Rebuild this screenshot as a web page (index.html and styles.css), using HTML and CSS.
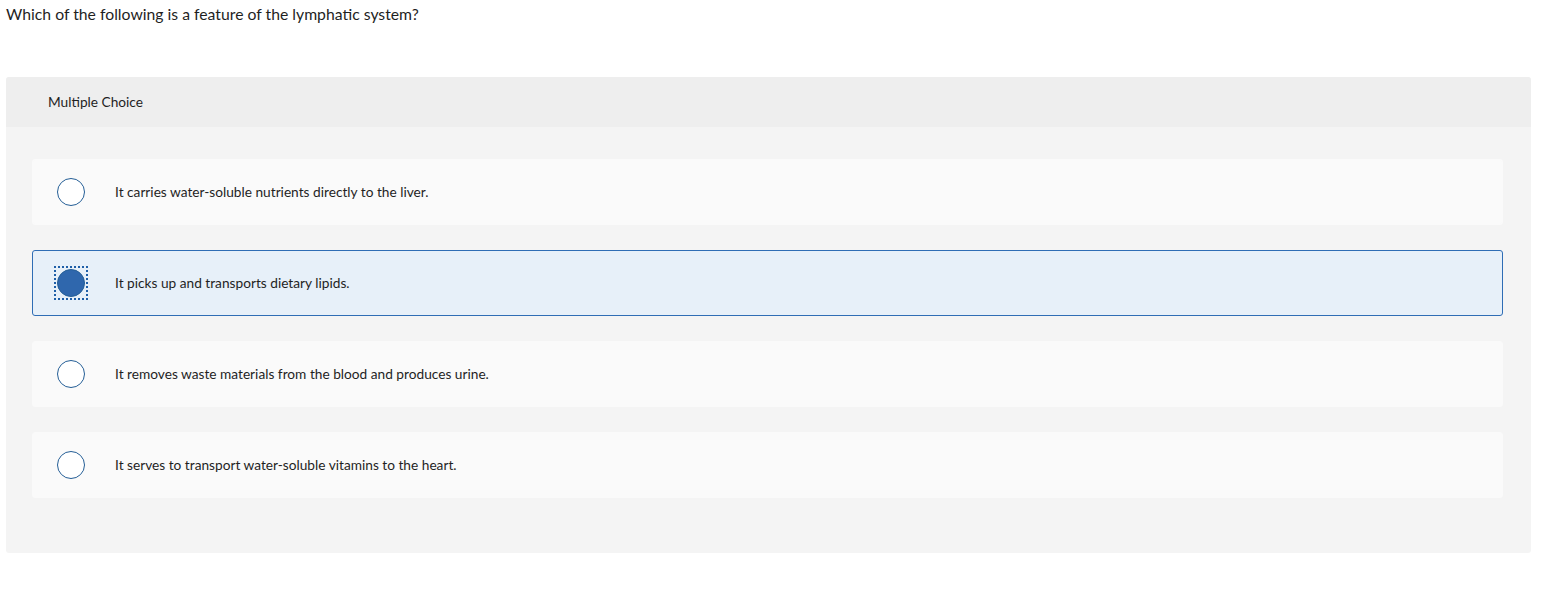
FILE: index.html
```html
<!DOCTYPE html>
<html lang="en">
<head>
<meta charset="utf-8">
<title>Multiple Choice</title>
<link rel="stylesheet" href="styles.css">
</head>
<body>
<div class="page">
  <p class="question">Which of the following is a feature of the lymphatic system?</p>
  <section class="panel">
    <div class="panel-header"><span class="header-text">Multiple Choice</span></div>
    <div class="options">
      <div class="option">
        <span class="radio-focus"><span class="radio"></span></span>
        <span class="label">It carries water-soluble nutrients directly to the liver.</span>
      </div>
      <div class="option selected">
        <span class="radio-focus focused"><span class="radio checked"></span></span>
        <span class="label">It picks up and transports dietary lipids.</span>
      </div>
      <div class="option">
        <span class="radio-focus"><span class="radio"></span></span>
        <span class="label">It removes waste materials from the blood and produces urine.</span>
      </div>
      <div class="option">
        <span class="radio-focus"><span class="radio"></span></span>
        <span class="label">It serves to transport water-soluble vitamins to the heart.</span>
      </div>
    </div>
  </section>
</div>
</body>
</html>
```

FILE: styles.css
```css
html, body {
  margin: 0;
  padding: 0;
  background: #ffffff;
}

body {
  font-family: Lato, "Liberation Sans", Arial, sans-serif;
  color: #1f1f1f;
}

.page {
  padding: 0 25px 0 6px;
}

.question {
  margin: 0;
  padding-top: 5px;
  font-size: 15.75px;
  line-height: 18px;
  height: 77px;
  box-sizing: border-box;
}

.panel {
  width: 1525px;
  background: #f4f4f4;
  border-radius: 3px;
  overflow: hidden;
}

.panel-header {
  height: 50px;
  background: #eeeeee;
  display: flex;
  align-items: center;
  padding-left: 42px;
  font-size: 13.7px;
}

.header-text {
  padding-bottom: 2px;
}

.options {
  padding: 32px 28px 55px 26px;
  display: flex;
  flex-direction: column;
  gap: 25px;
}

.option {
  height: 66px;
  box-sizing: border-box;
  background: #fafafa;
  border: 1px solid #fafafa;
  border-radius: 3px;
  display: flex;
  align-items: center;
  padding-left: 21px;
}

.option.selected {
  background: #e7f0f9;
  border-color: #2f6db5;
}

.radio-focus {
  display: flex;
  padding: 1px;
  border: 2px dotted transparent;
  flex: none;
}

.radio-focus.focused {
  border-color: #1f5fa8;
}

.radio {
  width: 28px;
  height: 28px;
  box-sizing: border-box;
  border-radius: 50%;
  border: 1.5px solid #245e96;
  background: #ffffff;
}

.radio.checked {
  background: #2f67ad;
  border-color: #245e96;
}

.label {
  margin-left: 27px;
  font-size: 13.7px;
  padding-bottom: 2px;
}
```
